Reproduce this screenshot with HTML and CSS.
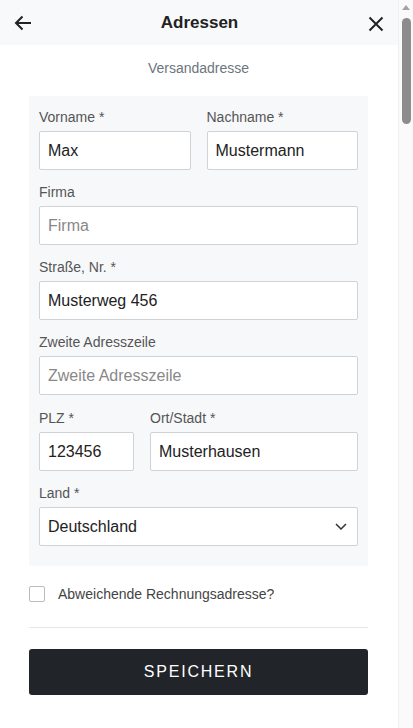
FILE: index.html
```html
<!DOCTYPE html>
<html lang="de">
<head>
<meta charset="utf-8">
<title>Adressen</title>
<link rel="stylesheet" href="styles.css">
</head>
<body>
<div class="viewport">
  <div class="page">
    <header class="topbar">
      <button class="icon-btn back" aria-label="Zurück">
        <svg width="18" height="16" viewBox="0 0 18 16"><path d="M17 8H2M8.5 1.5L2 8l6.5 6.5" fill="none" stroke="#222" stroke-width="2"/></svg>
      </button>
      <h1 class="title">Adressen</h1>
      <button class="icon-btn close" aria-label="Schließen">
        <svg width="16" height="16" viewBox="0 0 16 16"><path d="M1.5 1.5l13 13M14.5 1.5l-13 13" fill="none" stroke="#222" stroke-width="2"/></svg>
      </button>
    </header>

    <main class="content">
      <p class="section-title">Versandadresse</p>

      <form class="address-box">
        <div class="row two">
          <label class="field"><span class="label">Vorname *</span><input class="input" type="text" value="Max"></label>
          <label class="field"><span class="label">Nachname *</span><input class="input" type="text" value="Mustermann"></label>
        </div>
        <label class="field"><span class="label">Firma</span><input class="input" type="text" placeholder="Firma"></label>
        <label class="field"><span class="label">Straße, Nr. *</span><input class="input" type="text" value="Musterweg 456"></label>
        <label class="field"><span class="label">Zweite Adresszeile</span><input class="input" type="text" placeholder="Zweite Adresszeile"></label>
        <div class="row zip">
          <label class="field"><span class="label">PLZ *</span><input class="input" type="text" value="123456"></label>
          <label class="field"><span class="label">Ort/Stadt *</span><input class="input" type="text" value="Musterhausen"></label>
        </div>
        <label class="field"><span class="label">Land *</span>
          <span class="select">
            <span class="select-value">Deutschland</span>
            <svg class="chevron" width="12" height="7" viewBox="0 0 12 7"><path d="M1 1l5 5 5-5" fill="none" stroke="#333" stroke-width="1.5"/></svg>
          </span>
        </label>
      </form>

      <label class="check">
        <span class="box"></span>
        <span class="check-label">Abweichende Rechnungsadresse?</span>
      </label>

      <hr class="divider">

      <button class="save" type="button">SPEICHERN</button>
    </main>
  </div>

  <div class="scrollbar" aria-hidden="true">
    <span class="scroll-arrow"></span>
    <span class="scroll-thumb"></span>
  </div>
</div>
</body>
</html>
```

FILE: styles.css
```css
* { box-sizing: border-box; }
html, body { margin: 0; padding: 0; }
body {
  font-family: "Liberation Sans", Arial, sans-serif;
  color: #222;
  background: #fff;
}
.viewport {
  display: flex;
  height: 728px;
  overflow: hidden;
}
.page { flex: 1; min-width: 0; }

.scrollbar {
  width: 15px;
  flex: none;
  background: #fafafa;
  border-left: 1px solid #f0f0f0;
  display: flex;
  flex-direction: column;
  align-items: center;
  padding-top: 5px;
}
.scroll-arrow {
  width: 0;
  height: 0;
  border-left: 4px solid transparent;
  border-right: 4px solid transparent;
  border-bottom: 5px solid #a3a3a3;
}
.scroll-thumb {
  margin-top: 8px;
  width: 9px;
  height: 106px;
  border-radius: 5px;
  background: #8c8c8c;
}

.topbar {
  height: 45px;
  background: #f8f9fa;
  display: flex;
  align-items: center;
  justify-content: space-between;
  padding: 0 12px;
}
.icon-btn {
  background: none;
  border: 0;
  padding: 0;
  width: 22px;
  height: 22px;
  display: flex;
  align-items: center;
  justify-content: center;
}
.back { margin-top: 1px; }
.close { margin-top: 2px; margin-right: -1px; }
.title {
  margin: 0;
  font-size: 17px;
  font-weight: bold;
  color: #222;
}

.content {
  padding: 0 30px 0 29px;
}
.section-title {
  margin: 15px 0 20px;
  text-align: center;
  font-size: 14px;
  line-height: 16px;
  color: #6c757d;
}

.address-box {
  background: #f7f8fa;
  padding: 11px 10px 20px;
  display: flex;
  flex-direction: column;
  gap: 12px;
}
.row { display: grid; gap: 16px; }
.row.two { grid-template-columns: 1fr 1fr; }
.row.zip { grid-template-columns: 95px 1fr; margin-top: 1px; }

.field { display: flex; flex-direction: column; }
.label {
  font-size: 14px;
  line-height: 20px;
  color: #555;
  margin-bottom: 4px;
}
.input, .select {
  height: 39px;
  width: 100%;
  border: 1px solid #d0d3d6;
  border-radius: 2px;
  background: #fff;
  font-family: "Liberation Sans", Arial, sans-serif;
  font-size: 16px;
  color: #222;
  padding: 0 8px;
  outline: none;
}
.input::placeholder { color: #888; }
.select {
  display: flex;
  align-items: center;
  justify-content: space-between;
  padding-right: 10px;
}

.check {
  display: flex;
  align-items: center;
  gap: 13px;
  margin-top: 20px;
}
.box {
  width: 16px;
  height: 16px;
  border: 1px solid #bbb;
  border-radius: 2px;
  background: #fff;
}
.check-label { font-size: 14px; line-height: 16px; color: #444; }

.divider {
  border: 0;
  border-top: 1px solid #e6e6e6;
  margin: 25px 0 21px;
}

.save {
  width: 100%;
  height: 46px;
  border: 0;
  border-radius: 3px;
  background: #212529;
  color: #fff;
  font-family: "Liberation Sans", Arial, sans-serif;
  font-size: 16px;
  letter-spacing: 1.8px;
}
```
